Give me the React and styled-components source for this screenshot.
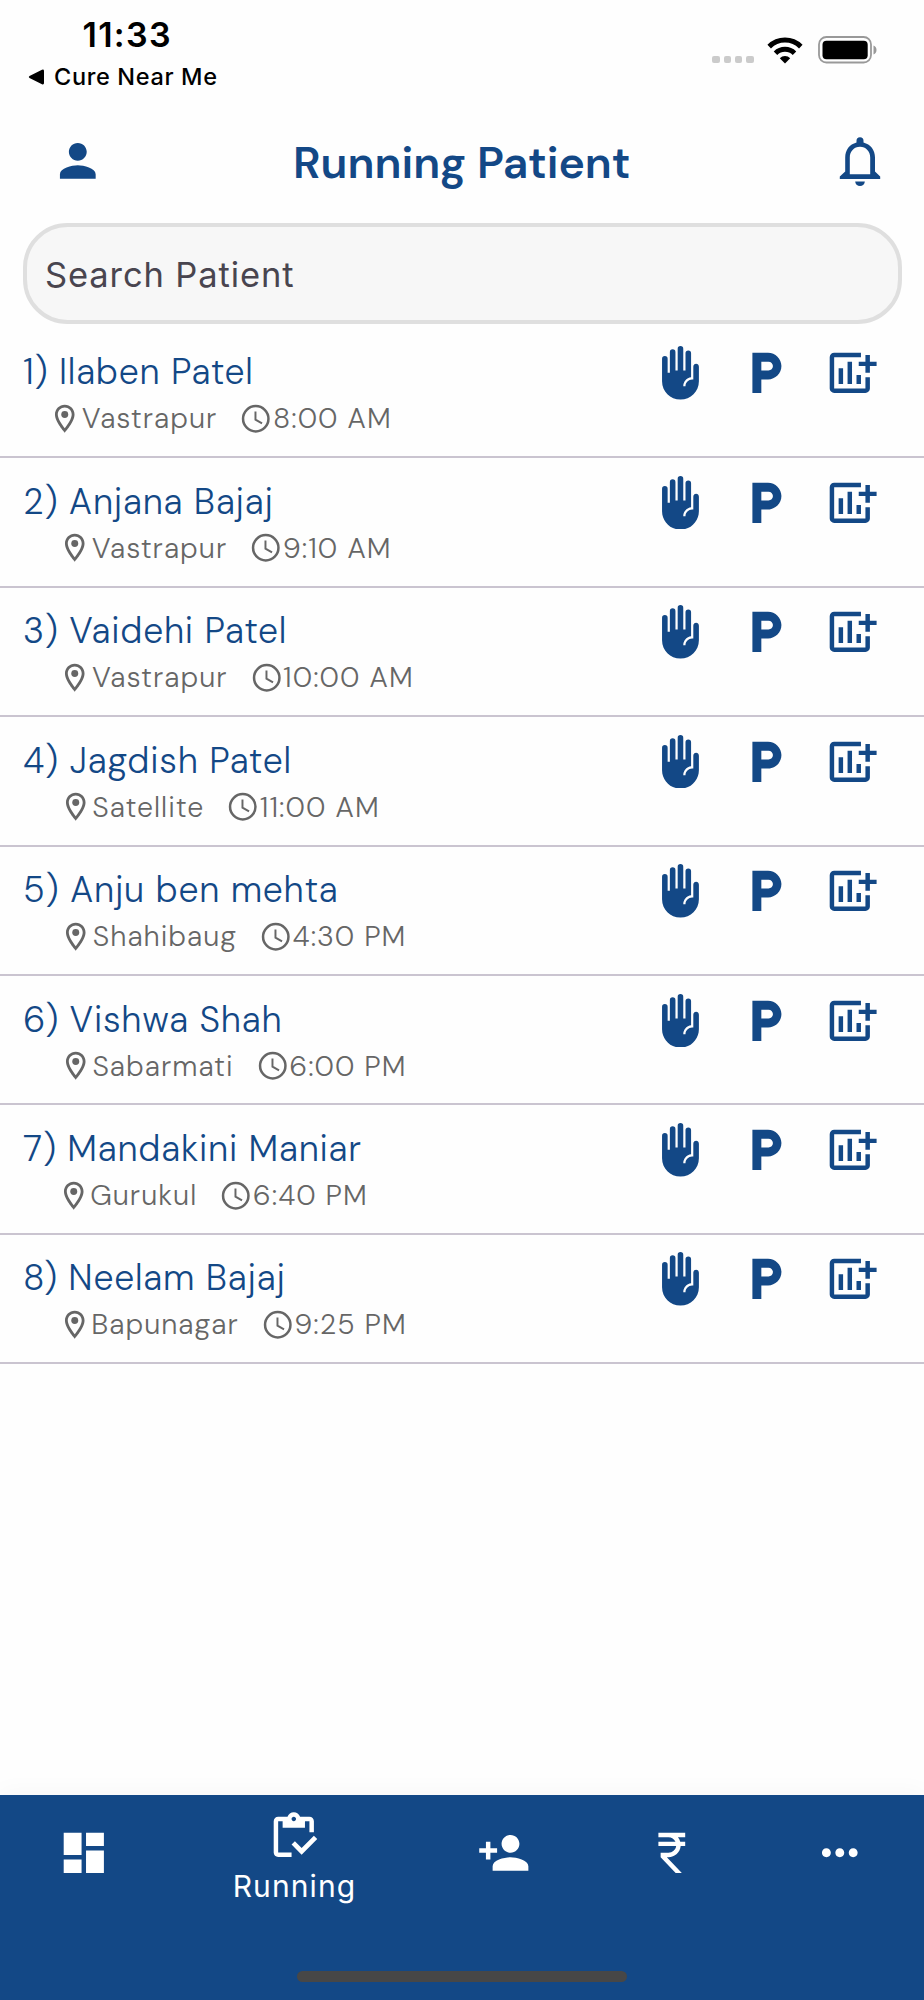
import React from "react";
import styled, { createGlobalStyle } from "styled-components";
import {
  MdPerson,
  MdFrontHand,
  MdLocalParking,
  MdDashboard,
  MdPersonAdd,
  MdCurrencyRupee,
  MdMoreHoriz,
  MdOutlineInventory,
  MdOutlineLocationOn,
} from "react-icons/md";

const navy = "#134886";
const brand = '"DM Sans", Inter, "Liberation Sans", sans-serif';
const system = 'Inter, "Liberation Sans", sans-serif';

const GlobalStyle = createGlobalStyle`
  body { margin: 0; background: #fefefe; }
  *, *::before, *::after { box-sizing: border-box; }
  svg { display: block; flex: none; }
`;

const Screen = styled.div`
  width: 924px;
  height: 2000px;
  display: flex;
  flex-direction: column;
  overflow: hidden;
  background: #fefefe;
  font-family: ${brand};
`;

const StatusBar = styled.div`
  height: 108px;
  display: flex;
  justify-content: space-between;
  color: #000;
  font-family: ${system};
`;

const StatusLeft = styled.div`
  padding: 14px 0 0 28px;
`;

const Clock = styled.div`
  padding-left: 54.5px;
  font-size: 34px;
  line-height: 42px;
  font-weight: 600;
  letter-spacing: 1.3px;
`;

const BackLink = styled.div`
  display: flex;
  align-items: center;
  gap: 9px;
  margin-top: 5.5px;
  font-size: 23.5px;
  line-height: 30px;
  font-weight: 500;
  letter-spacing: 0.65px;
`;

const StatusRight = styled.div`
  display: flex;
  align-items: flex-end;
  height: 64px;
  padding-right: 47px;
`;

const Signal = styled.div`
  display: flex;
  gap: 3.7px;
  margin-right: 13.5px;
  padding-bottom: 1px;
`;

const WifiSlot = styled.div`
  margin-right: 15px;
`;

const Dot = styled.i`
  width: 7.5px;
  height: 7px;
  border-radius: 2px;
  background: #cbcbcb;
`;

const Header = styled.header`
  height: 106px;
  padding: 0 43px 0 51px;
  display: grid;
  grid-template-columns: 54px 1fr 42px;
  align-items: center;
  color: ${navy};
`;

const Title = styled.h1`
  margin: 0;
  padding: 4px 20.5px 0 0;
  text-align: center;
  font-size: 44.6px;
  line-height: 58px;
  font-weight: 600;
`;

const SearchBox = styled.div`
  margin: 9px 22.5px 5.2px;
  height: 100.5px;
  flex: none;
  display: flex;
  align-items: center;
  padding: 2px 0 0 18.5px;
  border: 4.5px solid #dfdfdf;
  border-radius: 44.6px;
  background: #f7f7f7;
  color: #49454f;
  font-family: ${system};
  font-size: 34.5px;
  font-weight: 400;
  letter-spacing: 0.88px;
`;

const List = styled.ul`
  margin: 0;
  padding: 0;
  list-style: none;
  flex: 1;
`;

const Row = styled.li`
  display: flex;
  justify-content: space-between;
  height: 129.46px;
  padding: 17.6px 47px 0 23px;
  border-bottom: 2.23px solid #cac4d0;
`;

const Patient = styled.div`
  display: flex;
  padding-top: 1px;
  color: ${navy};
  font-size: 35.7px;
  line-height: 50px;
  font-weight: 300;
  letter-spacing: 0.77px;
`;

const Index = styled.span`
  white-space: pre;
`;

const Meta = styled.div`
  display: flex;
  align-items: center;
  margin: 0 0 0 -10.7px;
  color: #666;
  font-size: 28.6px;
  line-height: 43px;
  letter-spacing: 1px;
`;

const Place = styled.span`
  margin-right: 22px;
`;

const Actions = styled.div`
  display: flex;
  gap: 31.3px;
  color: ${navy};
`;

const HandAction = styled(MdFrontHand)`
  margin-right: 1.5px;
`;

const Nav = styled.nav`
  position: relative;
  height: 205.5px;
  flex: none;
  display: flex;
  background: ${navy};
  color: #fff;
  box-shadow: 0 -4px 22px rgba(0, 0, 0, 0.03);
`;

const Tab = styled.div`
  flex: ${(p) => (p.$active ? 1.5 : 1)} 1 0;
  display: flex;
  flex-direction: column;
  align-items: center;
  padding-top: ${(p) => (p.$active ? 15.6 : 31)}px;
`;

const TabLabel = styled.span`
  padding-left: 1px;
  font-family: ${system};
  font-size: 30px;
  line-height: 44px;
  font-weight: 400;
  letter-spacing: 1.1px;
`;

const HomeIndicator = styled.div`
  position: absolute;
  left: 297px;
  bottom: 18px;
  width: 330px;
  height: 11px;
  border-radius: 6px;
  background: #474747;
`;

const Bell = () => (
  <svg width="42" height="48" viewBox="0 0 42 48" overflow="visible" fill="currentColor">
    <path
      fillRule="evenodd"
      d="M17.5 5.6V3.8a3.5 3.5 0 0 1 7 0v1.8C31.500 7.500 36 13 36 20.500V34.500L41.200 39.500V42H.8V39.500L6.200 34.500V20.500C6.200 13 10.500 7.500 17.500 5.600ZM10.800 37.300H31.200V20.500C31.200 14.500 27 9.700 21 9.700S10.800 14.500 10.800 20.500Z"
    />
    <path d="M16.200 44.500h9.600a4.800 4.500 0 0 1-9.600 0Z" />
  </svg>
);

const AddChart = ({ size }) => (
  <svg width={size} height={size} viewBox="0 0 24 24" fill="currentColor">
    <path d="M17 3H5a2 2 0 0 0-2 2v14a2 2 0 0 0 2 2h14a2 2 0 0 0 2-2v-5h-2v5H5V5h12z" />
    <path d="M7 10h2v7H7zM11 7h2v10h-2zM15 13h2v4h-2zM19 4h2v3h3v2h-3v3h-2V9h-3V7h3z" />
  </svg>
);

const TimeIcon = ({ size }) => (
  <svg width={size} height={size} viewBox="0 0 24 24" fill="none" stroke="currentColor">
    <circle cx="12" cy="12" r="9.100" strokeWidth="1.800" />
    <path d="M11.800 6.800v5.800l4.700 2.700" strokeWidth="1.400" />
  </svg>
);

const Wifi = () => (
  <svg width="36" height="27" viewBox="0 0 36 27" fill="none" stroke="#000" strokeWidth="5">
    <path d="M2.200 9.600a22.500 22.500 0 0 1 31.600 0" />
    <path d="M8.500 16.200a13.600 13.600 0 0 1 19 0" />
    <path d="M18 26.500l-5.200-5.300a7.500 7.500 0 0 1 10.400 0z" fill="#000" stroke="none" />
  </svg>
);

const Battery = () => (
  <svg width="59" height="28" viewBox="0 0 59 28">
    <rect x="1" y="1" width="52" height="25.500" rx="7.500" fill="none" stroke="#999" strokeWidth="1.800" />
    <rect x="4.500" y="4.700" width="45.200" height="18.500" rx="4" fill="#000" />
    <path d="M55.500 9.500q3 1.200 3 4.500t-3 4.500z" fill="#999" />
  </svg>
);

const BackArrow = () => (
  <svg width="17" height="16" viewBox="0 0 17 16">
    <path d="M1.500 7 14 .7Q16 0 16 2v12q0 2-2 1.300L1.500 9Q0 8 1.500 7Z" />
  </svg>
);

const patients = [
  ["Ilaben Patel", "Vastrapur", "8:00 AM"],
  ["Anjana Bajaj", "Vastrapur", "9:10 AM"],
  ["Vaidehi Patel", "Vastrapur", "10:00 AM"],
  ["Jagdish Patel", "Satellite", "11:00 AM"],
  ["Anju ben mehta", "Shahibaug", "4:30 PM"],
  ["Vishwa Shah", "Sabarmati", "6:00 PM"],
  ["Mandakini Maniar", "Gurukul", "6:40 PM"],
  ["Neelam Bajaj", "Bapunagar", "9:25 PM"],
];

const ICON = 53.6;

export default function App() {
  return (
    <Screen>
      <GlobalStyle />
      <StatusBar>
        <StatusLeft>
          <Clock>11:33</Clock>
          <BackLink>
            <BackArrow />
            Cure Near Me
          </BackLink>
        </StatusLeft>
        <StatusRight>
          <Signal>
            <Dot />
            <Dot />
            <Dot />
            <Dot />
          </Signal>
          <WifiSlot>
            <Wifi />
          </WifiSlot>
          <Battery />
        </StatusRight>
      </StatusBar>
      <Header>
        <MdPerson size={ICON} />
        <Title>Running Patient</Title>
        <Bell />
      </Header>
      <SearchBox>Search Patient</SearchBox>
      <List>
        {patients.map(([name, place, time], i) => (
          <Row key={name}>
            <Patient>
              <Index>{`${i + 1}) `}</Index>
              <div>
                <div>{name}</div>
                <Meta>
                  <MdOutlineLocationOn size={33.5} />
                  <Place>{place}</Place>
                  <TimeIcon size={33.5} />
                  <span>{time}</span>
                </Meta>
              </div>
            </Patient>
            <Actions>
              <HandAction size={ICON} />
              <MdLocalParking size={ICON} />
              <AddChart size={ICON} />
            </Actions>
          </Row>
        ))}
      </List>
      <Nav>
        <Tab>
          <MdDashboard size={ICON} />
        </Tab>
        <Tab $active>
          <MdOutlineInventory size={ICON} />
          <TabLabel>Running</TabLabel>
        </Tab>
        <Tab>
          <MdPersonAdd size={ICON} />
        </Tab>
        <Tab>
          <MdCurrencyRupee size={ICON} />
        </Tab>
        <Tab>
          <MdMoreHoriz size={ICON} />
        </Tab>
        <HomeIndicator />
      </Nav>
    </Screen>
  );
}
